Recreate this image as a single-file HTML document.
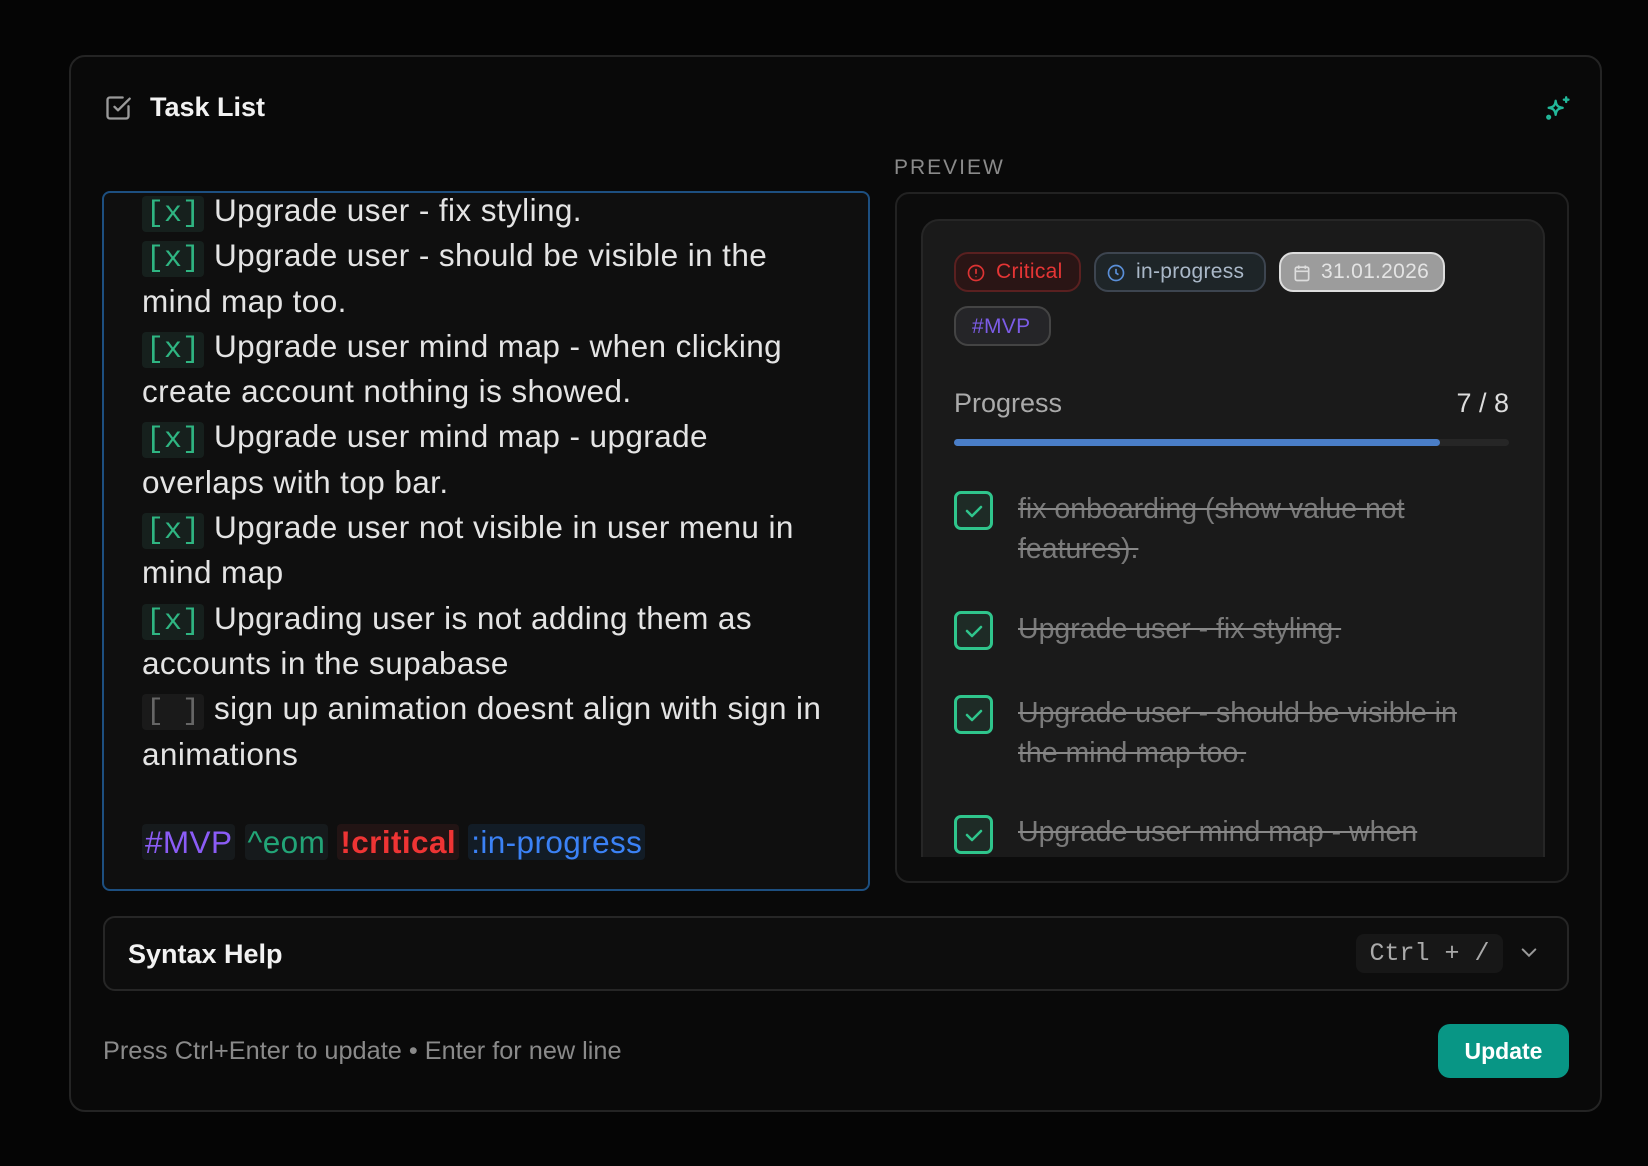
<!DOCTYPE html>
<html><head><meta charset="utf-8"><style>
*{box-sizing:border-box;margin:0;padding:0}
body{width:1648px;height:1166px;background:#050505;font-family:"Liberation Sans",sans-serif;position:relative;overflow:hidden;color:#eee}
.abs{position:absolute}
.card{left:69px;top:55px;width:1533px;height:1057px;border:2px solid #242424;border-radius:16px;background:#090909}
.editor{left:102px;top:191px;width:768px;height:700px;border:2px solid #1d4f80;border-radius:8px;background:#0f0f0f;overflow:hidden}
.lines{position:absolute;left:38px;top:-5px;width:720px;font-size:31.5px;letter-spacing:0.4px;color:#e4e4e4}
.lines div{height:45.3px;line-height:45.3px;white-space:nowrap}
.cb{font-family:"Liberation Mono",monospace;font-size:30px;line-height:1;display:inline-block;color:#2fb582;background:#16201d;border-radius:4px;padding:3px 4px;margin-right:10px;letter-spacing:0}
.cb.e{color:#666;background:#1a1a1a}
.tag{border-radius:4px;padding:0 3px;background:#161a1c}
.prev{left:895px;top:192px;width:674px;height:691px;border:2px solid #222;border-radius:14px;background:#0c0c0c;overflow:hidden}
.inner{position:absolute;left:24px;top:25px;width:624px;height:700px;border:2px solid #262626;border-radius:18px;background:#1a1a1a}
.chip{position:absolute;height:40px;border-radius:14px;font-size:21px;line-height:36px;padding-left:40px;border:2px solid;letter-spacing:0.3px}
.item{position:absolute;left:1018px;width:470px;font-size:28.5px;line-height:40px;color:#7a7a7a;text-decoration:line-through;text-decoration-color:#888}
.box{position:absolute;left:954px;width:39px;height:39px;border:3px solid #2fc58c;border-radius:7px;background:#1e2b26}
</style></head><body>
<div class="abs card"></div>
<svg class="abs" style="left:104px;top:94px" width="28" height="28" viewBox="0 0 24 24" fill="none" stroke="#9a9a9a" stroke-width="2" stroke-linecap="round" stroke-linejoin="round"><path d="M21 10.5V19a2 2 0 0 1-2 2H5a2 2 0 0 1-2-2V5a2 2 0 0 1 2-2h11"/><path d="m9 11 3 3L22 4"/></svg>
<div class="abs" style="left:150px;top:92px;font-size:27px;font-weight:bold;color:#f2f2f2">Task List</div>
<svg class="abs" style="left:1544px;top:95px" width="28" height="28" viewBox="0 0 24 24" fill="none" stroke="#22b89a" stroke-width="2" stroke-linecap="round" stroke-linejoin="round"><path d="M10 5c.5 4 2 5.5 6 6-4 .5-5.5 2-6 6-.5-4-2-5.5-6-6 4-.5 5.5-2 6-6z"/><path d="M19 2v4M17 4h4"/><circle cx="4" cy="19" r="1.2"/></svg>
<div class="abs" style="left:894px;top:156px;font-size:21px;letter-spacing:2px;color:#8a8a8a">PREVIEW</div>

<div class="abs editor"><div class="lines">
<div><span class="cb">[x]</span>Upgrade user - fix styling.</div>
<div><span class="cb">[x]</span>Upgrade user - should be visible in the</div>
<div>mind map too.</div>
<div><span class="cb">[x]</span>Upgrade user mind map - when clicking</div>
<div>create account nothing is showed.</div>
<div><span class="cb">[x]</span>Upgrade user mind map - upgrade</div>
<div>overlaps with top bar.</div>
<div><span class="cb">[x]</span>Upgrade user not visible in user menu in</div>
<div>mind map</div>
<div><span class="cb">[x]</span>Upgrading user is not adding them as</div>
<div>accounts in the supabase</div>
<div><span class="cb e">[ ]</span>sign up animation doesnt align with sign in</div>
<div>animations</div>
<div>&nbsp;</div>
<div style="margin-top:-2px"><span class="tag" style="color:#8b5cf6">#MVP</span> <span class="tag" style="color:#22a577">^eom</span> <span class="tag" style="color:#ef3434;font-weight:bold;background:#221414">!critical</span> <span class="tag" style="color:#3b82f6;background:#121c26">:in-progress</span></div>
</div></div>

<div class="abs prev"><div class="inner"></div></div>
<div class="chip" style="left:954px;top:252px;width:127px;border-color:#5a2020;background:#2a1515;color:#e53535">Critical</div>
<svg class="abs" style="left:966px;top:263px" width="20" height="20" viewBox="0 0 24 24" fill="none" stroke="#d33" stroke-width="2"><circle cx="12" cy="12" r="9"/><path d="M12 7v6M12 16v1"/></svg>
<div class="chip" style="left:1094px;top:252px;width:172px;border-color:#3d4550;background:#1e2528;color:#aab8c8">in-progress</div>
<svg class="abs" style="left:1106px;top:263px" width="20" height="20" viewBox="0 0 24 24" fill="none" stroke="#5a8fd8" stroke-width="2"><circle cx="12" cy="12" r="9"/><path d="M12 7v5l3 2"/></svg>
<div class="chip" style="left:1279px;top:252px;width:166px;border-color:#ddd;background:#9c9c9c;color:#e4e4e4">31.01.2026</div>
<svg class="abs" style="left:1292px;top:263px" width="20" height="20" viewBox="0 0 24 24" fill="none" stroke="#ddd" stroke-width="2"><rect x="4" y="5" width="16" height="16" rx="2"/><path d="M4 10h16M8 3v4M16 3v4"/></svg>
<div class="chip" style="left:954px;top:306px;width:97px;padding-left:16px;border-color:#444;background:#252528;color:#7c5ce6;line-height:38px">#MVP</div>
<div class="abs" style="left:954px;top:388px;font-size:27px;color:#aaa">Progress</div>
<div class="abs" style="left:1400px;top:388px;width:109px;text-align:right;font-size:27px;color:#ddd">7 / 8</div>
<div class="abs" style="left:954px;top:439px;width:555px;height:7px;border-radius:4px;background:#262626"></div>
<div class="abs" style="left:954px;top:439px;width:486px;height:7px;border-radius:4px;background:#4a7ec8"></div>

<div class="box" style="top:491px"></div>
<div class="box" style="top:611px"></div>
<div class="box" style="top:695px"></div>
<div class="box" style="top:815px"></div>
<svg class="abs" style="left:954px;top:491px" width="40" height="365" fill="none" stroke="#2fc58c" stroke-width="2.5" stroke-linecap="round" stroke-linejoin="round"><path d="M13 20l5 5 9-9M13 140l5 5 9-9M13 224l5 5 9-9M13 344l5 5 9-9"/></svg>
<div class="item" style="top:489px">fix onboarding (show value not features).</div>
<div class="item" style="top:609px">Upgrade user - fix styling.</div>
<div class="item" style="top:693px">Upgrade user - should be visible in the mind map too.</div>
<div class="item" style="top:812px;height:45px;overflow:hidden">Upgrade user mind map - when clicking create</div>
<div class="abs" style="left:921px;top:857px;width:624px;height:24px;background:#0c0c0c"></div>

<div class="abs" style="left:103px;top:916px;width:1466px;height:75px;border:2px solid #262626;border-radius:12px;background:#0d0d0d"></div>
<div class="abs" style="left:128px;top:939px;font-size:27px;font-weight:bold;color:#f2f2f2">Syntax Help</div>
<div class="abs" style="left:1356px;top:934px;width:147px;height:39px;border-radius:8px;background:#171717;font-family:'Liberation Mono',monospace;font-size:25px;line-height:39px;color:#aaa;text-align:center">Ctrl + /</div>
<svg class="abs" style="left:1518px;top:944px" width="22" height="18" viewBox="0 0 24 20" fill="none" stroke="#999" stroke-width="2.2" stroke-linecap="round"><path d="M5 6l7 7 7-7"/></svg>
<div class="abs" style="left:103px;top:1037px;font-size:25.3px;color:#8a8a8a">Press Ctrl+Enter to update • Enter for new line</div>
<div class="abs" style="left:1438px;top:1024px;width:131px;height:54px;border-radius:12px;background:#089685;color:#fff;font-size:23px;font-weight:bold;line-height:54px;text-align:center">Update</div>
</body></html>
